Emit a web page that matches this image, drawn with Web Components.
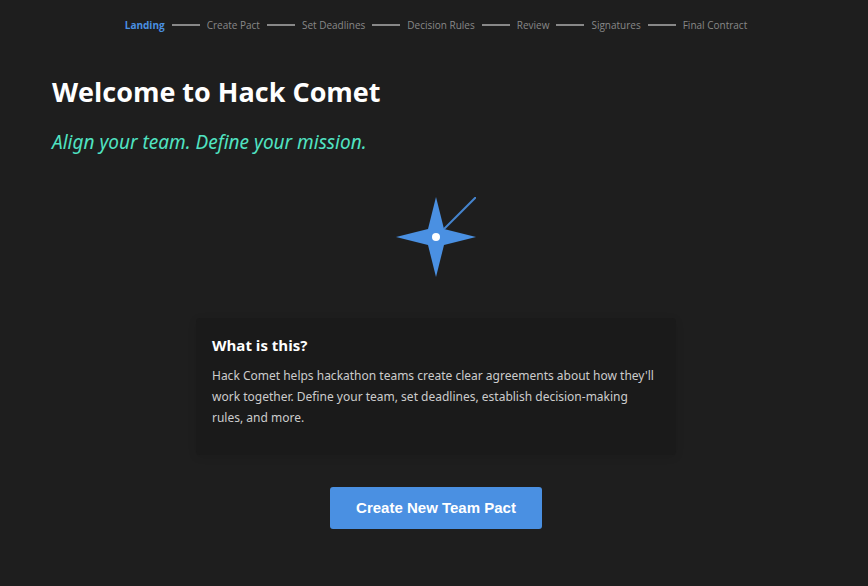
<!DOCTYPE html>
<html lang="en">
<head>
<meta charset="utf-8">
<meta name="viewport" content="width=device-width, initial-scale=1">
<title>Hack Comet</title>
<style>
  body { margin: 0; background: #1e1e1e; color: #fff; font-family: "Open Sans", "Noto Sans", sans-serif; }
</style>
</head>
<body>
<comet-page>
  <comet-steps slot="nav">
    <comet-step current>Landing</comet-step>
    <comet-step>Create Pact</comet-step>
    <comet-step>Set Deadlines</comet-step>
    <comet-step>Decision Rules</comet-step>
    <comet-step>Review</comet-step>
    <comet-step>Signatures</comet-step>
    <comet-step>Final Contract</comet-step>
  </comet-steps>
  <comet-hero>Welcome to Hack Comet<span slot="tagline">Align your team. Define your mission.</span></comet-hero>
  <comet-logo></comet-logo>
  <comet-card><span slot="title">What is this?</span>Hack Comet helps hackathon teams create clear agreements about how they'll work together. Define your team, set deadlines, establish decision-making rules, and more.</comet-card>
  <comet-button>Create New Team Pact</comet-button>
</comet-page>
<script>
  const define = (name, html) => customElements.define(name, class extends HTMLElement {
    constructor() {
      super();
      this.attachShadow({ mode: "open" }).innerHTML = html;
    }
  });

  define("comet-page", `
    <style>
      :host { display: block; padding: 16px 48px 48px 52px; }
      main { display: flex; flex-direction: column; align-items: center; }
    </style>
    <slot name="nav"></slot>
    <main><slot></slot></main>`);

  define("comet-steps", `
    <style>
      :host { display: block; }
      nav { display: flex; justify-content: center; gap: 7px; }
    </style>
    <nav aria-label="Progress"><slot></slot></nav>`);

  define("comet-step", `
    <style>
      :host { display: flex; align-items: center; gap: 7px; font-size: 10px; line-height: 18px; color: #888; white-space: nowrap; }
      :host([current]) { color: #4a90e2; font-weight: 700; }
      :host(:not(:last-child))::after { content: ""; width: 28px; height: 2px; background: #888; }
    </style>
    <span><slot></slot></span>`);

  define("comet-hero", `
    <style>
      :host { display: block; align-self: stretch; padding-top: 38px; }
      h1 { margin: 0; font-size: 27px; line-height: 40px; font-weight: 700; }
      p { margin: 16px 0 0; font-family: "Noto Sans", sans-serif; font-size: 19px; line-height: 28px; font-style: italic; color: #50e3c2; }
    </style>
    <h1><slot></slot></h1>
    <p><slot name="tagline"></slot></p>`);

  define("comet-logo", `
    <style>
      :host { display: block; padding: 41px 0; }
      svg { display: block; width: 80px; height: 80px; }
    </style>
    <svg viewBox="0 0 80 80" aria-hidden="true">
      <path d="M40 0L48 32L80 40L48 48L40 80L32 48L0 40L32 32Z" fill="#4a90e2"/>
      <path d="M48 32L80 0" stroke="#4a90e2" stroke-width="2" opacity=".9"/>
      <circle cx="40" cy="40" r="4" fill="#fff"/>
    </svg>`);

  define("comet-card", `
    <style>
      :host { display: block; box-sizing: border-box; width: 100%; max-width: 480px; padding: 17px 16px 27px; border-radius: 4px; background: #1a1a1a; box-shadow: 0 2px 8px rgba(0, 0, 0, .1); }
      h2 { margin: 0 0 10px; font-size: 15px; line-height: 20px; font-weight: 700; }
      p { margin: 0; font-family: "Noto Sans", sans-serif; font-size: 12px; line-height: 21px; color: #ccc; }
    </style>
    <h2><slot name="title"></slot></h2>
    <p><slot></slot></p>`);

  define("comet-button", `
    <style>
      :host { display: block; margin-top: 32px; }
      button { border: 0; border-radius: 3px; padding: 12px 26px; background: #4a90e2; color: #fff; font: 700 15px/18px "Liberation Sans", Arial, sans-serif; cursor: pointer; }
    </style>
    <button type="button"><slot></slot></button>`);
</script>
</body>
</html>
